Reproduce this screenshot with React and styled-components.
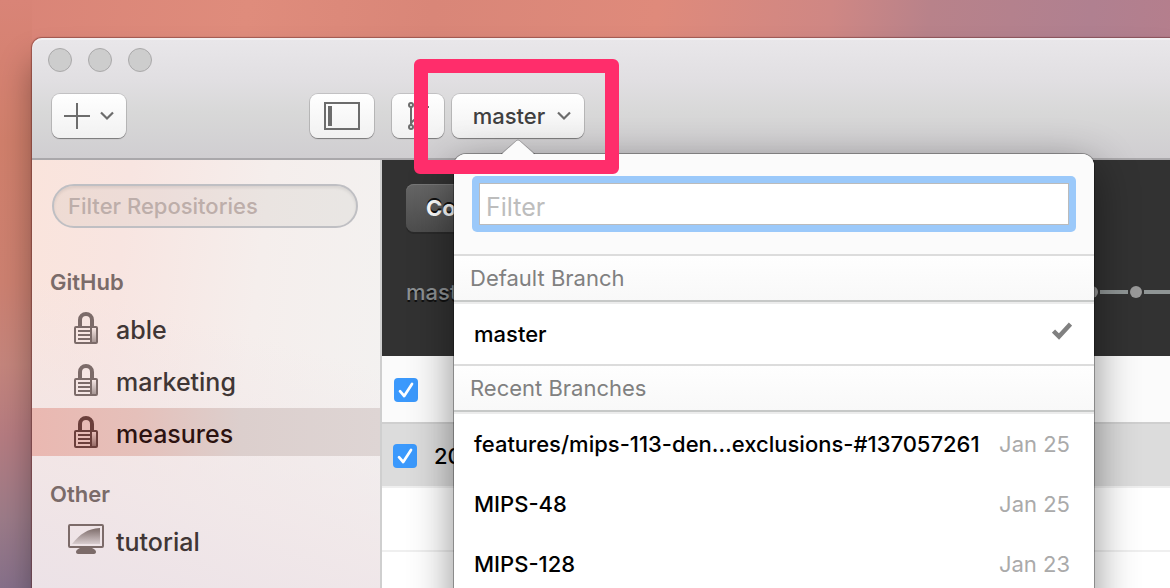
import React from 'react';
import styled, { createGlobalStyle, css } from 'styled-components';

const GlobalStyle = createGlobalStyle`
  * { box-sizing: border-box; }
  body { margin: 0; font-family: Inter, "Liberation Sans", sans-serif; }
  button, input { font-family: inherit; }
  ul { list-style: none; margin: 0; padding: 0; }
  h2, h3 { margin: 0; }
`;

const Desktop = styled.div`
  height: 100vh;
  overflow: hidden;
  padding: 38px 0 0 32px;
  display: flex;
  background:
    linear-gradient(180deg, #d98477 0%, #d07f6b 24%, #cc8070 48%, #c4857c 62%, #b57b80 74%, #9c7b88 88%, #86708a 100%) left / 32px 100% no-repeat,
    linear-gradient(97deg, #d98477 0%, #df8c7c 20%, #d98678 35%, #df8a7b 53%, #cf8784 67%, #b8828a 75%, #b08090 88%, #b87d8a 100%);
`;

const Window = styled.div`
  flex: 1;
  min-width: 0;
  display: flex;
  flex-direction: column;
  border-top-left-radius: 10px;
  box-shadow: 0 0 1px 1px rgba(90, 30, 30, 0.45), 0 24px 32px rgba(0, 0, 0, 0.35);
`;

const TitleBar = styled.header`
  position: relative;
  z-index: 1;
  display: flex;
  flex-direction: column;
  gap: 22px;
  padding: 10px 0 20px 16px;
  border-top-left-radius: 10px;
  border-bottom: 2px solid #aaa8ab;
  background: linear-gradient(180deg, #e9e7ea 0%, #e1dfe2 35%, #d8d8d8 62%, #d0ced1 100%);
  box-shadow: inset 0 2px 0 rgba(255, 255, 255, 0.4);
`;

const Lights = styled.div`
  display: flex;
  gap: 16px;
`;

const Light = styled.button`
  width: 24px;
  height: 24px;
  padding: 0;
  border: 1px solid #aaa9aa;
  border-radius: 50%;
  background: #cdcdcd;
`;

const Toolbar = styled.div`
  display: flex;
  gap: 18px;
  padding-left: 4px;
`;

const ToolGroup = styled.div`
  display: flex;
  gap: 8px;
  ${({ $wide }) => $wide && css`
    width: 322px;
    justify-content: space-between;
  `}
`;

const ToolButton = styled.button`
  display: flex;
  align-items: center;
  justify-content: center;
  gap: 10px;
  width: ${({ $width }) => $width}px;
  height: 44px;
  padding: 0;
  border: 0;
  border-radius: 8px;
  color: #404040;
  font-size: 22px;
  font-weight: 500;
  background: linear-gradient(180deg, #ffffff, #f1f1f1);
  box-shadow: 0 0 0 1px rgba(0, 0, 0, 0.12), 0 1px 1px rgba(0, 0, 0, 0.35);
`;

const BranchPicker = styled.div`
  position: relative;
`;

const BranchButton = styled(ToolButton)`
  gap: 12px;
  padding-left: 8px;
`;

const Highlight = styled.div`
  position: absolute;
  z-index: 3;
  inset: -35px -35px -36px -38px;
  border: 14px solid #ff2d6b;
  border-radius: 6px;
  pointer-events: none;
`;

const Popover = styled.section`
  position: absolute;
  z-index: 2;
  top: 60px;
  left: 2px;
  width: 640px;
  min-height: 100vh;
  border-radius: 12px;
  background: #fff;
  box-shadow: 0 0 0 1px rgba(0, 0, 0, 0.3), 0 12px 44px rgba(0, 0, 0, 0.45);
`;

const Arrow = styled.svg`
  position: absolute;
  top: -15px;
  left: 46px;
`;

const PopoverTop = styled.div`
  padding: 30px 26px;
  border-radius: 12px 12px 0 0;
  background: #fbfbfb;
`;

const FocusRing = styled.label`
  display: block;
  border-radius: 5px;
  margin: -8px;
  padding: 7px;
  background: #9bc9fa;
`;

const BranchFilter = styled.input`
  display: block;
  width: 100%;
  height: 42px;
  padding: 6px 6px 0;
  border: 1px solid #bbb;
  border-radius: 0;
  outline: none;
  background: #fff;
  font-size: 25px;
  &::placeholder { color: #bdbdbd; opacity: 1; }
`;

const SectionTitle = styled.h3`
  height: 50px;
  padding: 0 16px;
  border-top: 2px solid #dcdcdc;
  border-bottom: 2px solid #ececec;
  color: #808080;
  font-size: 22px;
  font-weight: 400;
  line-height: 44px;
  background: linear-gradient(180deg, #fefefe, #f8f8f8);
  box-shadow: inset 0 -2px 0 #c6c8c7;
`;

const BranchRow = styled.li`
  display: flex;
  align-items: center;
  justify-content: space-between;
  height: 60px;
  padding: 0 24px 0 20px;
  color: #000;
  font-size: 22px;
  font-weight: 500;
  white-space: nowrap;
  time { color: #aaa; font-weight: 400; }
`;

const CheckMark = styled.svg`
  margin-right: -2px;
`;

const Body = styled.div`
  flex: 1;
  display: flex;
  min-height: 0;
`;

const Sidebar = styled.aside`
  flex: none;
  width: 350px;
  padding-top: 24px;
  border-right: 2px solid #cfcfcf;
  background:
    linear-gradient(15deg, #ece2e7 0%, rgba(240, 230, 232, 0.8) 25%, transparent 60%),
    linear-gradient(97deg, #fae4dc 0%, #f8e5e1 25%, #f5eeec 60%, #f3f2f1 100%);
`;

const RepoFilter = styled.input`
  display: block;
  width: 306px;
  height: 44px;
  margin-left: 20px;
  padding: 0 14px;
  border: 2px solid #bfbfc3;
  border-radius: 22px;
  outline: none;
  background: rgba(120, 110, 100, 0.08);
  box-shadow: inset 0 2px 3px rgba(0, 0, 0, 0.08);
  font-size: 22px;
  &::placeholder { color: #bdaeaa; opacity: 1; font-weight: 500; }
`;

const RepoGroup = styled.section`
  margin-top: ${({ $gap }) => $gap}px;
`;

const GroupTitle = styled.h2`
  height: 42px;
  padding-left: 18px;
  color: #7a6b69;
  font-size: 22px;
  font-weight: 600;
  line-height: 40px;
`;

const RepoList = styled.ul`
  display: flex;
  flex-direction: column;
  gap: 4px;
`;

const Repo = styled.li`
  display: flex;
  align-items: center;
  gap: 12px;
  height: 48px;
  padding-left: 36px;
  color: ${({ $selected }) => ($selected ? '#2c1210' : '#403635')};
  font-size: 25px;
  font-weight: 500;
  background: ${({ $selected }) => ($selected ? 'linear-gradient(90deg, #eab8b1, #e5c0ba 30%, #dccfcd 60%, #ded5d4)' : 'none')};
  svg { flex: none; color: ${({ $selected }) => ($selected ? '#6b3f3b' : '#7c6b69')}; }
  span { padding-top: 3px; }
`;

const Main = styled.main`
  flex: 1;
  min-width: 0;
  background: #fff;
`;

const BranchHeader = styled.div`
  height: 196px;
  padding: 24px 0 0 24px;
  background: #323232;
`;

const CompareButton = styled.button`
  display: block;
  height: 48px;
  padding: 0 20px;
  border: 0;
  border-radius: 8px;
  color: #fff;
  font-size: 22px;
  font-weight: 700;
  text-shadow: 0 -2px 0 #111;
  background: linear-gradient(180deg, #666, #4d4d4d);
  box-shadow: inset 0 1px 0 #777, 0 2px 0 #2a2a2a;
`;

const Timeline = styled.div`
  display: flex;
  align-items: center;
  gap: 2px;
  height: 24px;
  margin-top: 48px;
  overflow: hidden;
`;

const TimelineLabel = styled.span`
  flex: none;
  width: 150px;
  color: #8c9092;
  font-size: 22px;
  font-weight: 500;
  line-height: 24px;
  text-shadow: 0 2px 0 #111;
`;

const Dot = styled.i`
  flex: none;
  width: 12px;
  height: 12px;
  border-radius: 50%;
  background: #999;
`;

const Line = styled.i`
  flex: none;
  width: 28px;
  height: 4px;
  background: #8f9595;
`;

const Change = styled.li`
  display: flex;
  align-items: center;
  height: ${({ $tall }) => ($tall ? 68 : 64)}px;
  padding: 2px 0 0 ${({ $tall }) => ($tall ? 12 : 11)}px;
  border-bottom: 2px solid ${({ $tall }) => ($tall ? '#cfcfcf' : '#efefef')};
  background: ${({ $tone }) => $tone || '#fff'};
  font-size: 22px;
  font-weight: 500;
  label { display: flex; align-items: center; gap: 17px; }
`;

const Tick = styled.input`
  appearance: none;
  width: 24px;
  height: 24px;
  margin: 0;
  border-radius: 4px;
  background: #3b99fc url("data:image/svg+xml,%3Csvg xmlns='http://www.w3.org/2000/svg' viewBox='0 0 24 24'%3E%3Cpath d='M6 13.2 10.2 18 18 6' fill='none' stroke='white' stroke-width='2.7' stroke-linecap='round' stroke-linejoin='round'/%3E%3C/svg%3E") center / 24px no-repeat;
`;

const Chevron = () => (
  <svg width="14" height="10" viewBox="0 0 14 10" fill="none" stroke="#6c6c6c" strokeWidth="2.2">
    <path d="M1 1.5 7 7.500l6-6" />
  </svg>
);

const LockIcon = ({ id }) => (
  <svg width="36" height="32" viewBox="-6 0 36 32" fill="none" stroke="currentColor">
    <defs>
      <linearGradient id={id} x2="0" y2="1">
        <stop offset="0" stopColor="currentColor" stopOpacity="0" />
        <stop offset="1" stopColor="currentColor" stopOpacity="0.65" />
      </linearGradient>
    </defs>
    <path d="M6 15V8a6 6 0 0 1 12 0v7" strokeWidth="4" />
    <rect x="1" y="15" width="22" height="16" rx="1" strokeWidth="2" />
    <rect x="18" y="16" width="4" height="14" fill={`url(#${id})`} stroke="none" />
    <path d="M17 16v14M4 19h13M4 23h13M4 27h13" strokeWidth="2" />
  </svg>
);

const ScreenIcon = () => (
  <svg width="36" height="32" viewBox="0 0 36 32" fill="none">
    <defs>
      <linearGradient id="screen" x2="0" y2="1">
        <stop offset="0" stopColor="currentColor" />
        <stop offset="1" stopColor="currentColor" stopOpacity="0.2" />
      </linearGradient>
    </defs>
    <rect x="1" y="1" width="34" height="22" rx="1" stroke="currentColor" strokeWidth="2" />
    <path d="M4 20C12 10 19 5 32 4v16z" fill="url(#screen)" />
    <path d="M12 24h12c3 1 4 3 4 4s-1 2-2 2H10c-1 0-2-1-2-2s1-3 4-4z" fill="currentColor" />
  </svg>
);

const repoGroups = [
  { title: 'GitHub', gap: 34, repos: ['able', 'marketing', 'measures'] },
  { title: 'Other', gap: 18, repos: ['tutorial'] },
];

const recent = [
  ['features/mips-113-den…exclusions-#137057261', 'Jan 25'],
  ['MIPS-48', 'Jan 25'],
  ['MIPS-128', 'Jan 23'],
];

const commits = Array.from({ length: 14 }, (_, i) => i);

export default function App() {
  return (
    <Desktop>
      <GlobalStyle />
      <Window>
        <TitleBar>
          <Lights>
            <Light aria-label="Close" />
            <Light aria-label="Minimize" />
            <Light aria-label="Zoom" />
          </Lights>
          <Toolbar>
            <ToolGroup $wide>
              <ToolButton $width={74} aria-label="Add repository">
                <svg width="26" height="26" viewBox="0 0 26 26" stroke="#6c6c6c" strokeWidth="2">
                  <path d="M13 0v26M0 13h26" />
                </svg>
                <Chevron />
              </ToolButton>
              <ToolButton $width={64} aria-label="Toggle sidebar">
                <svg width="36" height="28" viewBox="0 0 36 28" fill="none" stroke="#6c6c6c">
                  <rect x="1" y="1" width="34" height="26" strokeWidth="2" />
                  <path d="M6 4v20" strokeWidth="4" />
                </svg>
              </ToolButton>
            </ToolGroup>
            <ToolGroup>
              <ToolButton $width={52} aria-label="New branch">
                <svg width="22" height="28" viewBox="0 0 22 28" fill="none" stroke="#6c6c6c" strokeWidth="2">
                  <circle cx="4" cy="3" r="2" />
                  <circle cx="4" cy="25" r="2" />
                  <path d="M4 5v18M4 22c1-6 10-5 12-13M17 0v10M12 5h11" />
                </svg>
              </ToolButton>
              <BranchPicker>
                <BranchButton $width={132} aria-expanded="true">
                  master
                  <Chevron />
                </BranchButton>
                <Popover aria-label="Branches">
                  <Arrow width="36" height="16" viewBox="0 0 36 16">
                    <path d="M1 16 16.500 2q1.500-1.200 3 0L35 16z" fill="#fbfbfb" />
                    <path d="M1 15 16.500 1.500q1.500-1.200 3 0L35 15" fill="none" stroke="#000" strokeOpacity="0.2" />
                  </Arrow>
                  <PopoverTop>
                    <FocusRing>
                      <BranchFilter placeholder="Filter" aria-label="Filter branches" />
                    </FocusRing>
                  </PopoverTop>
                  <SectionTitle>Default Branch</SectionTitle>
                  <ul>
                    <BranchRow>
                      master
                      <CheckMark width="20" height="24" viewBox="0 0 20 24" fill="none" stroke="#808080" strokeWidth="4.500">
                        <path d="M1.500 9 7 14.500 18.500 2" />
                      </CheckMark>
                    </BranchRow>
                  </ul>
                  <SectionTitle>Recent Branches</SectionTitle>
                  <ul>
                    {recent.map(([name, date]) => (
                      <BranchRow key={name}>
                        <span>{name}</span>
                        <time>{date}</time>
                      </BranchRow>
                    ))}
                  </ul>
                </Popover>
                <Highlight />
              </BranchPicker>
            </ToolGroup>
          </Toolbar>
        </TitleBar>
        <Body>
          <Sidebar>
            <RepoFilter placeholder="Filter Repositories" aria-label="Filter Repositories" />
            {repoGroups.map((group) => (
              <RepoGroup key={group.title} $gap={group.gap}>
                <GroupTitle>{group.title}</GroupTitle>
                <RepoList>
                  {group.repos.map((name) => (
                    <Repo key={name} $selected={name === 'measures'}>
                      {name === 'tutorial' ? <ScreenIcon /> : <LockIcon id={`lock-${name}`} />}
                      <span>{name}</span>
                    </Repo>
                  ))}
                </RepoList>
              </RepoGroup>
            ))}
          </Sidebar>
          <Main>
            <BranchHeader>
              <CompareButton>Compare</CompareButton>
              <Timeline>
                <TimelineLabel>master</TimelineLabel>
                {commits.map((n) => (
                  <React.Fragment key={n}>
                    <Dot />
                    <Line />
                  </React.Fragment>
                ))}
              </Timeline>
            </BranchHeader>
            <ul>
              <Change $tall $tone="#fbfbfb">
                <Tick type="checkbox" defaultChecked aria-label="Select all changes" />
              </Change>
              <Change $tone="#dcdcdc">
                <label>
                  <Tick type="checkbox" defaultChecked />
                  20
                </label>
              </Change>
              <Change />
              <Change />
            </ul>
          </Main>
        </Body>
      </Window>
    </Desktop>
  );
}
